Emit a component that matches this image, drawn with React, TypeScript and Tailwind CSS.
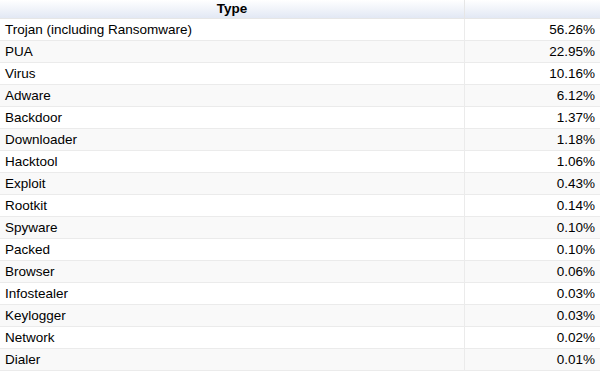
const rows: [string, string][] = [
    ['Trojan (including Ransomware)', '56.26%'],
    ['PUA', '22.95%'],
    ['Virus', '10.16%'],
    ['Adware', '6.12%'],
    ['Backdoor', '1.37%'],
    ['Downloader', '1.18%'],
    ['Hacktool', '1.06%'],
    ['Exploit', '0.43%'],
    ['Rootkit', '0.14%'],
    ['Spyware', '0.10%'],
    ['Packed', '0.10%'],
    ['Browser', '0.06%'],
    ['Infostealer', '0.03%'],
    ['Keylogger', '0.03%'],
    ['Network', '0.02%'],
    ['Dialer', '0.01%'],
];

export default function App() {
    return (
        <div className="h-[371px] w-[600px] overflow-hidden bg-white font-['Liberation_Sans',Arial,sans-serif] text-[13.5px] text-black">
            <div className="grid grid-cols-[465px_1fr]">
                <div className="flex h-[19px] items-center justify-center border-b border-r border-[#e6e6e6] bg-gradient-to-b from-white to-[#e2e8f4] pt-px font-bold">
                    Type
                </div>
                <div className="h-[19px] border-b border-[#e6e6e6] bg-gradient-to-b from-white to-[#e2e8f4]" />
                {rows.map(([name, pct], i) => (
                    <div key={name} className="contents">
                        <div className={`flex h-[22px] items-center border-b border-r border-[#ebebeb] pl-[5px] pt-[2px] ${i % 2 ? 'bg-[#f9f9f9]' : 'bg-white'}`}>
                            {name}
                        </div>
                        <div className={`flex h-[22px] items-center justify-end border-b border-[#ebebeb] pr-[5px] pt-[2px] ${i % 2 ? 'bg-[#f9f9f9]' : 'bg-white'}`}>
                            {pct}
                        </div>
                    </div>
                ))}
            </div>
        </div>
    );
}
